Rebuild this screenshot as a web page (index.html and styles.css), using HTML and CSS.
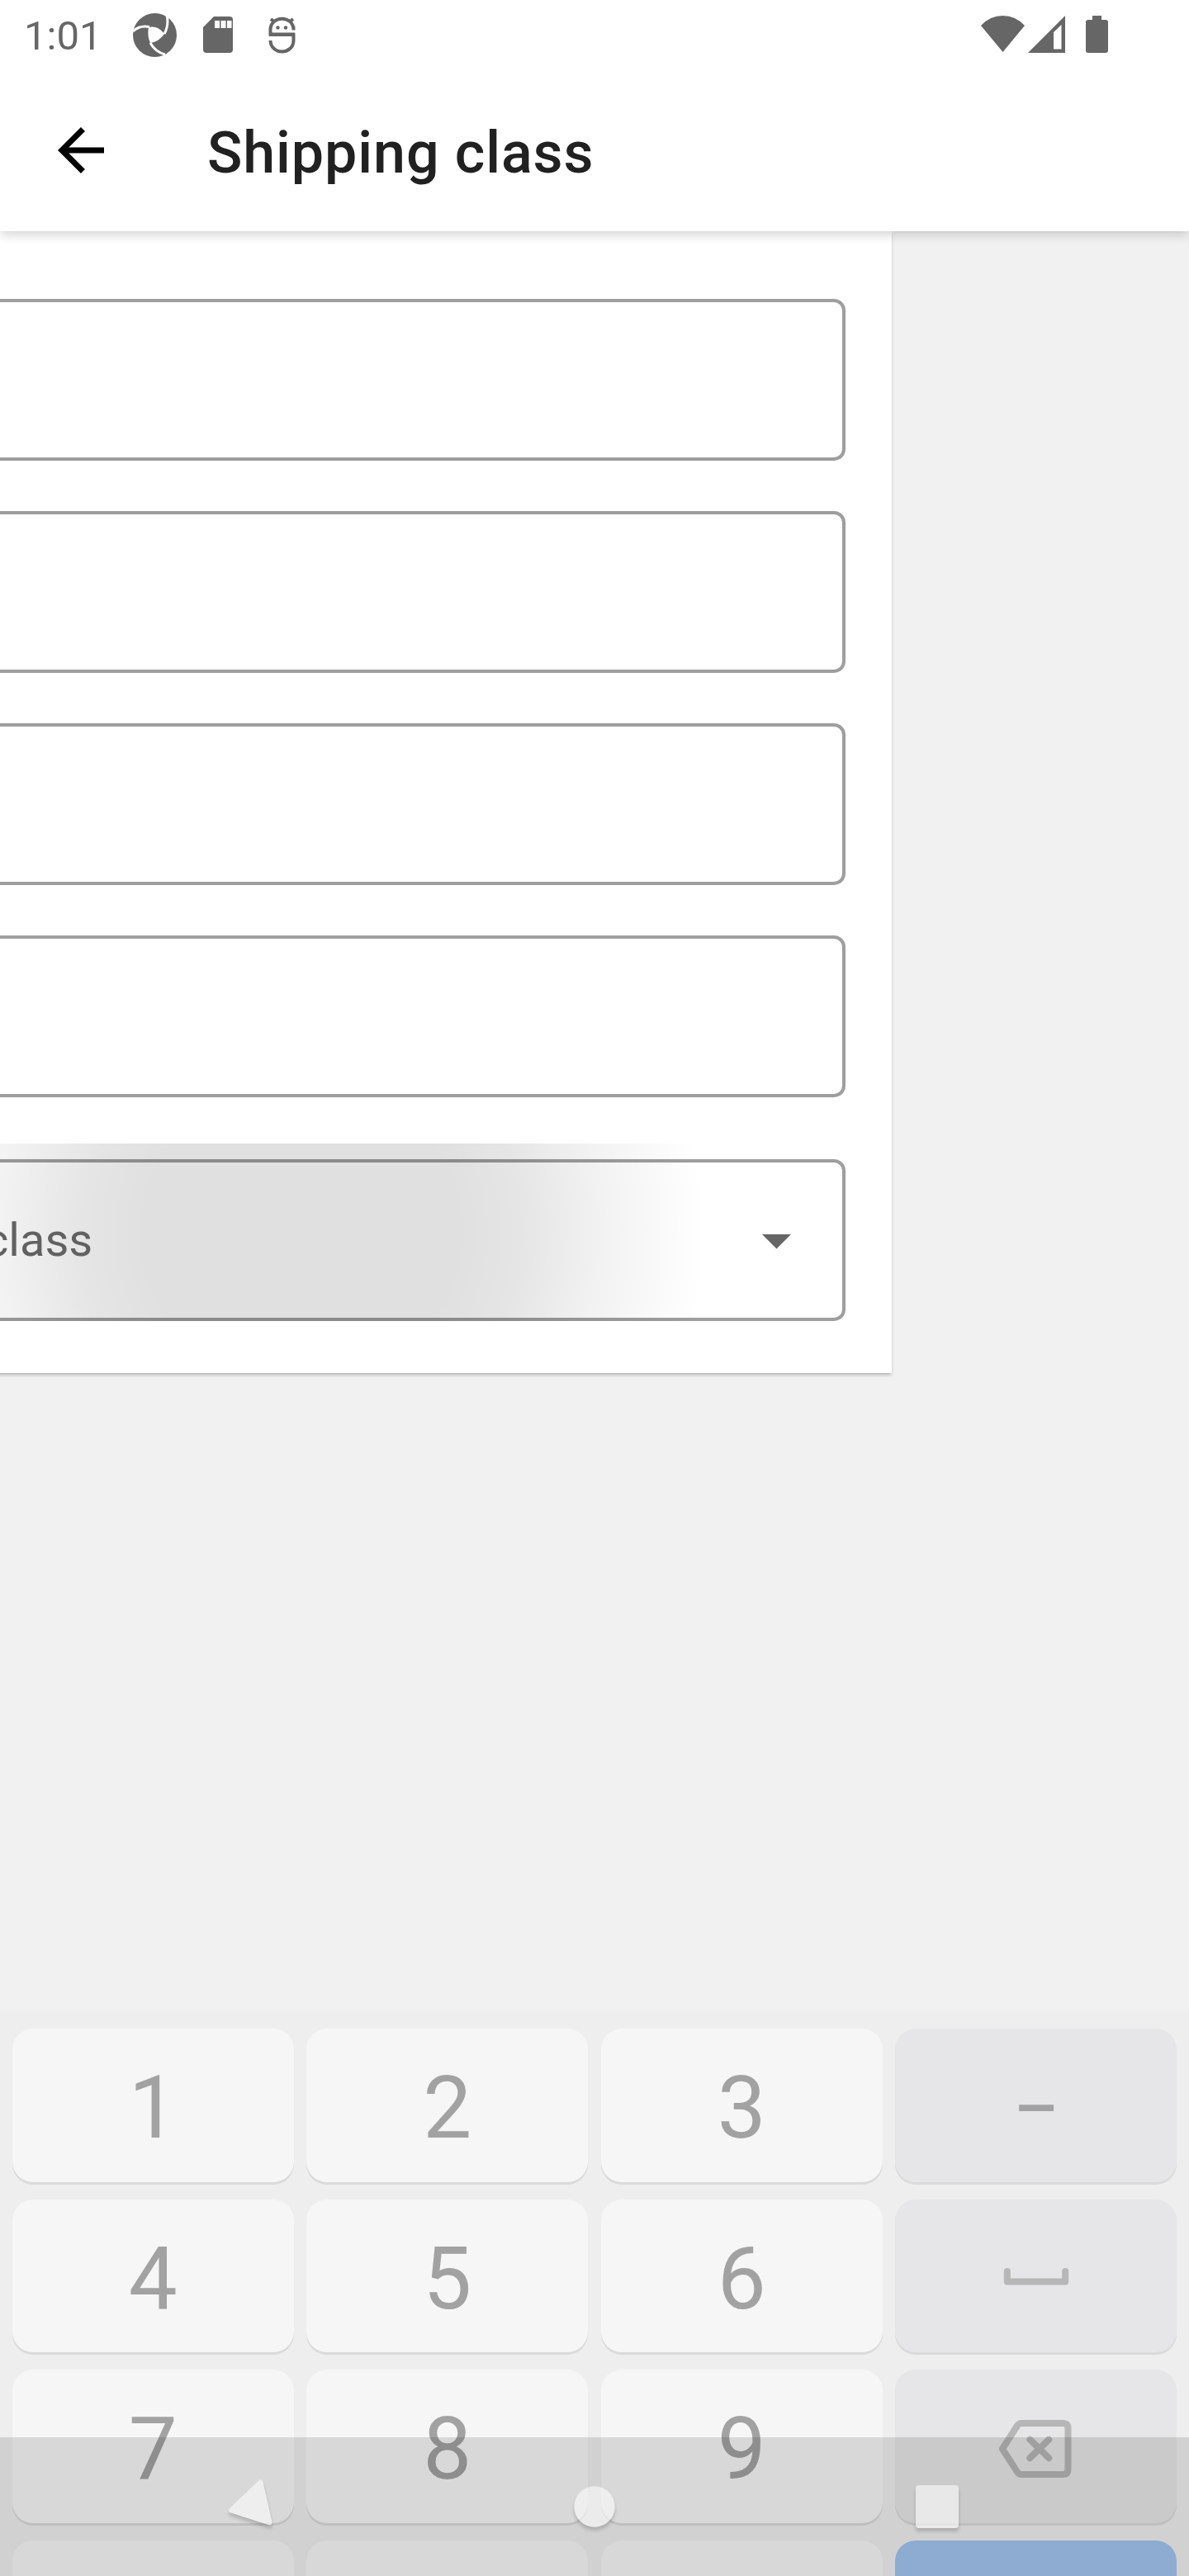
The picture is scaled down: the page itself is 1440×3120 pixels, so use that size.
FILE: index.html
```html
<!DOCTYPE html>
<html lang="en">
<head>
<meta charset="utf-8">
<title>Shipping class</title>
<link rel="stylesheet" href="styles.css">
</head>
<body>
<div class="screen">
  <header class="top">
    <div class="status">
      <span class="clock">1:01</span>
      <svg class="status-left" width="200" height="60" viewBox="160 14 200 60">
        <circle cx="187.500" cy="42.500" r="26.500"/>
        <path class="hole" d="M180 33C187 31 194 34 199 41C195 47 189 51 182 52C179 46 179 39 180 33Z"/>
        <path class="slit" d="M161 38C166 33 173 31 181 32.500M199 41C203 34 204 27 202 18M182 52C186 59 192 64 200 66"/>
        <path d="M259 20H278Q282 20 282 24V60Q282 64 278 64H250Q246 64 246 60V33Z"/>
        <path class="hole" d="M260 25h6v9h-6zM267.500 25h6v9h-6zM275 25h5.500v9H275z"/>
        <path class="line" d="M327.500 36.500C327.500 18 355.500 18 355.500 36.500M357 41.500H327.500V34M355.500 32V36M326 42H355.500V49C355.500 58 348 62.500 341.500 62.500C334 62.500 327.500 57 327.500 49M328 23L333 27M355 23L350 27"/>
        <circle cx="336.500" cy="33.500" r="2.200"/><circle cx="346" cy="33.500" r="2.200"/>
      </svg>
      <svg class="status-right" width="160" height="50" viewBox="1187 18 160 50">
        <path d="M1188 31Q1199 19 1214.500 19T1241 31L1214.500 63Z"/>
        <path fill-rule="evenodd" d="M1245 64L1290 19V64ZM1276 39V59.500H1285.500V30Z"/>
        <path d="M1323 19H1334V24H1339Q1342 24 1342 27V61Q1342 64 1339 64H1318Q1315 64 1315 61V27Q1315 24 1318 24H1323Z"/>
      </svg>
    </div>
    <div class="appbar">
      <svg class="back" width="84" height="84" viewBox="0 0 24 24"><path d="M20 11H7.830l5.590-5.590L12 4l-8 8 8 8 1.410-1.410L7.830 13H20v-2z"/></svg>
      <h1 class="title">Shipping class</h1>
    </div>
  </header>
  <main class="content">
    <section class="card">
      <div class="field"></div>
      <div class="field"></div>
      <div class="field"></div>
      <div class="field"></div>
      <div class="picker">
        <div class="field select">
          <span class="label">class</span>
          <svg width="36" height="18" viewBox="0 0 36 18"><path d="M0 0H35L17.500 17.500Z"/></svg>
        </div>
      </div>
    </section>
  </main>
  <section class="keyboard">
    <div class="key">1</div><div class="key">2</div><div class="key">3</div>
    <div class="key fn dash">–</div>
    <div class="key">4</div><div class="key">5</div><div class="key">6</div>
    <div class="key fn"><svg class="space" width="80" height="24" viewBox="0 0 80 24"><path d="M4.800 4V16.500H75.200V4"/></svg></div>
    <div class="key">7</div><div class="key">8</div><div class="key">9</div>
    <div class="key fn"><svg class="erase" width="90" height="72" viewBox="0 0 90 72"><path d="M27 5H77.500Q83.500 5 83.500 11V61Q83.500 67 77.500 67H27Q24 67 22 64L4 36L22 8Q24 5 27 5Z"/><path d="M37.300 24.700L60.300 47.200M60.300 24.700L37.300 47.200"/></svg></div>
    <div class="key"></div><div class="key"></div><div class="key"></div>
    <div class="key enter"></div>
  </section>
  <nav class="navbar">
    <svg width="1440" height="168" viewBox="0 2952 1440 168">
      <path class="tri" d="M315.500 3006.500L326.500 3055.500L280 3040.500Z"/>
      <circle cx="720" cy="3036" r="24.700"/>
      <rect x="1109" y="3010" width="52" height="52" rx="4"/>
    </svg>
  </nav>
</div>
</body>
</html>
```
FILE: styles.css
```css
* { box-sizing: border-box; }
body { margin: 0; font-family: Roboto, sans-serif; }
.screen {
  position: relative;
  display: flex;
  flex-direction: column;
  width: 1440px;
  height: 3120px;
  overflow: hidden;
  background: #f1f1f1;
}
.top {
  position: relative;
  z-index: 1;
  flex: none;
  height: 280px;
  background: #fff;
  box-shadow: 0 3px 14px rgba(0, 0, 0, .2);
}
.status {
  display: flex;
  height: 84px;
  padding: 14px 93px 0 29px;
  color: #666;
}
.status svg { fill: #666; }
.clock { width: 131px; font-size: 49px; line-height: 60px; }
.status-right { margin: 4px 0 0 auto; }
.status .hole { fill: #fff; }
.status .slit { fill: none; stroke: #fff; stroke-width: 3; }
.status .line { fill: none; stroke: #666; stroke-width: 4; }
.appbar { display: flex; align-items: center; height: 196px; padding-left: 56px; }
.title {
  margin: 6px 0 0 111px;
  color: #212121;
  font-size: 70px;
  font-weight: 500;
  letter-spacing: .9px;
  line-height: 84px;
}
.content { flex: none; height: 2150px; }
.card {
  display: flex;
  flex-direction: column;
  gap: 61px;
  width: 1100px;
  height: 1383px;
  margin-left: -20px;
  padding: 82px 56px 0 20px;
  background: #fff;
  box-shadow: 0 3px 4px -1px rgba(0, 0, 0, .28);
}
.field {
  flex: none;
  width: 1044px;
  height: 196px;
  margin-left: -20px;
  border: 4px solid #9e9e9e;
  border-radius: 14px;
}
.picker {
  flex: none;
  height: 215px;
  margin-top: -5px;
  padding-top: 19px;
  background: radial-gradient(circle at 365px 107px, rgba(0, 0, 0, .122) 190px, rgba(0, 0, 0, .1) 265px, rgba(0, 0, 0, .052) 365px, rgba(0, 0, 0, 0) 490px);
}
.select {
  display: flex;
  align-items: center;
  justify-content: space-between;
  padding-right: 61px;
  border-color: rgba(0, 0, 0, .38);
  color: #616161;
  font-size: 56px;
}
.label { margin-left: -3px; }
.select svg { margin-top: 4px; fill: #666; }
.keyboard {
  display: grid;
  flex: none;
  grid-template-columns: repeat(4, 1fr);
  grid-auto-rows: 185.500px;
  gap: 21px 15.750px;
  height: 690px;
  padding: 27px 15px 0;
  background: linear-gradient(#f1f1f1, #eee 12px);
}
.key {
  display: flex;
  align-items: center;
  justify-content: center;
  padding-top: 9px;
  border-radius: 25px;
  background: #f6f6f6;
  box-shadow: 0 3px #dadada;
  color: #a2a2a2;
  font-size: 105px;
  line-height: 120px;
}
.fn { padding-top: 6px; background: #e6e6e8; }
.dash { padding-top: 8px; font-size: 84px; font-weight: 500; }
.key svg { fill: none; stroke: #b6b6b6; stroke-width: 8; stroke-linejoin: round; stroke-linecap: round; }
.enter { background: #a2c3f0; }
.navbar {
  position: absolute;
  bottom: 0;
  left: 0;
  height: 168px;
  background: rgba(0, 0, 0, .12);
}
.navbar svg {
  display: block;
  fill: #fff;
  filter: drop-shadow(0 4px 2px rgba(0, 0, 0, .3));
  opacity: .58;
}
.tri { stroke: #fff; stroke-width: 6; stroke-linejoin: round; }
```
